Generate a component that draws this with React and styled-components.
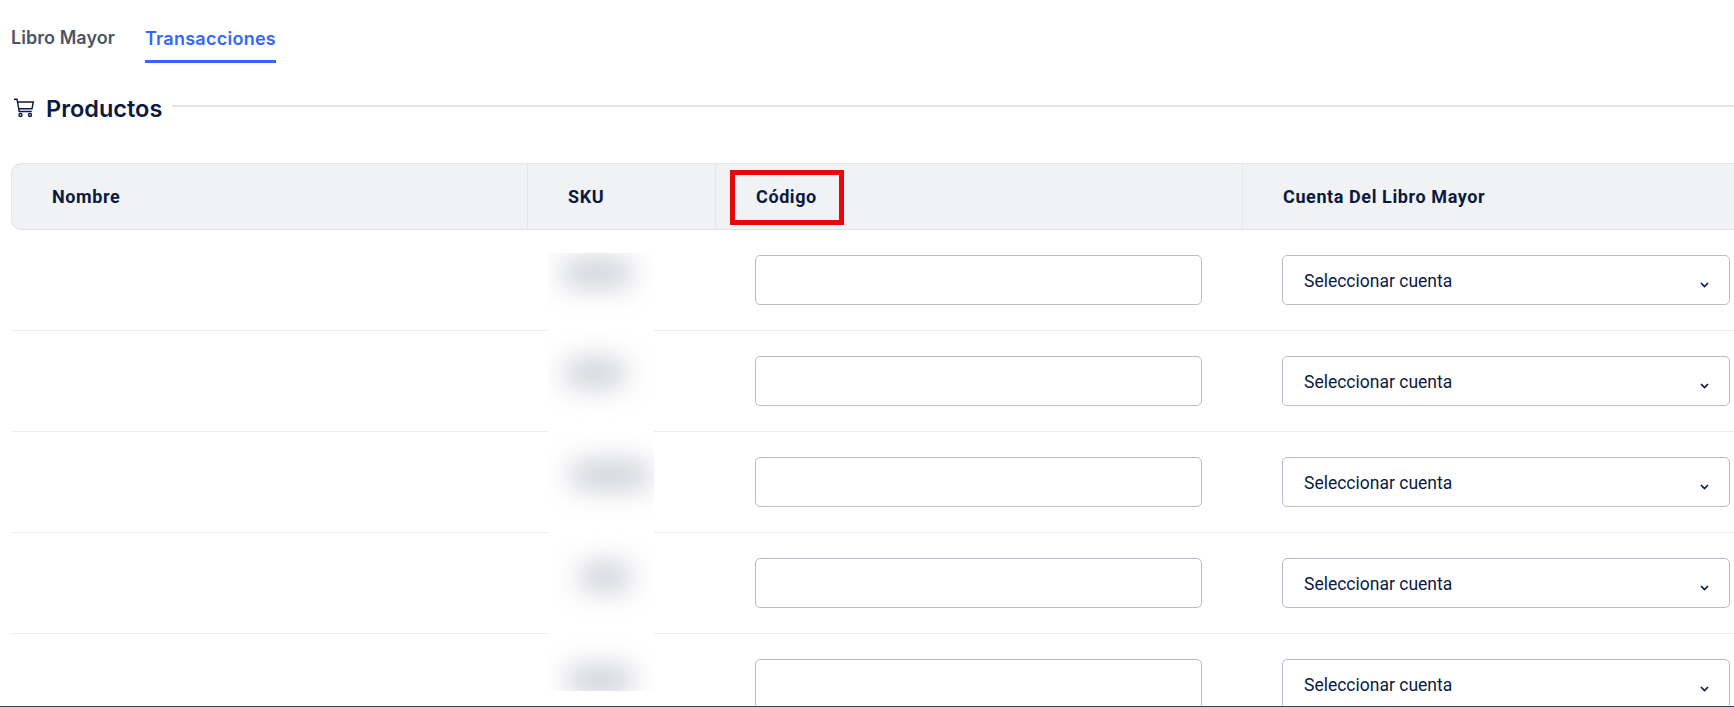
import React from "react";
import styled, { createGlobalStyle } from "styled-components";

const GlobalStyle = createGlobalStyle`
  html, body {
    margin: 0;
    padding: 0;
    height: 100%;
    overflow: hidden;
    background: #fff;
  }
  * {
    box-sizing: border-box;
  }
`;

const Page = styled.div`
  height: 100vh;
  display: flex;
  flex-direction: column;
  overflow: hidden;
`;
const Content = styled.main`
  flex: 1;
  min-height: 0;
  padding: 0 0 0 11px;
  overflow: hidden;
`;
const BottomRule = styled.div`
  height: 1px;
  flex: none;
  background: #3b4a4c;
`;

const Tabs = styled.nav`
  display: flex;
  gap: 30px;
  height: 63px;
  padding-top: 25px;
`;
const Tab = styled.a`
  height: 38px;
  font-family: Inter, sans-serif;
  font-size: 18px;
  font-weight: 600;
  line-height: 28px;
  letter-spacing: ${(p) => (p.$active ? "0.27px" : "0.05px")};
  color: ${(p) => (p.$active ? "#3366ff" : "#4b5563")};
  border-bottom: ${(p) => (p.$active ? "3px solid #3366ff" : "none")};
  margin-top: ${(p) => (p.$active ? "0" : "-1px")};
`;

const SectionHead = styled.div`
  display: flex;
  align-items: center;
  height: 100px;
  padding: 0 0 10px 2px;
`;
const SectionTitle = styled.h2`
  margin: 1px 10px 0 11px;
  font-family: Inter, sans-serif;
  font-size: 23.5px;
  font-weight: 600;
  line-height: 30px;
  color: #0b1a3f;
`;
const SectionLine = styled.div`
  flex: 1;
  height: 2px;
  margin-top: -5px;
  background: #e3e4e8;
`;

const Table = styled.div`
  width: 1760px;
  font-family: Roboto, sans-serif;
  color: #0b1a3f;
`;
const HeadRow = styled.div`
  display: grid;
  grid-template-columns: 516px 188px 527px 529px;
  height: 67px;
  background: #f1f2f4;
  border: 1px solid #e3e4e8;
  border-right: none;
  border-radius: 10px 0 0 10px;
`;
const HeadCell = styled.div`
  position: relative;
  display: flex;
  align-items: center;
  padding-left: 40px;
  font-size: 18px;
  font-weight: 700;
  letter-spacing: 0.6px;
  border-right: ${(p) => (p.$last ? "none" : "1px solid #e6e7eb")};
`;
const Highlight = styled.div`
  position: absolute;
  left: 14px;
  top: 6px;
  width: 114px;
  height: 55px;
  border: 5px solid #e80808;
`;

const Row = styled.div`
  display: grid;
  grid-template-columns: 516px 188px 527px 529px;
  height: 101px;
  border-bottom: 1px solid #eaedf1;
`;
const Cell = styled.div`
  padding: 25px 40px 0;
`;
const SkuCell = styled.div`
  position: relative;
`;
const SkuMask = styled.div`
  position: absolute;
  left: 21px;
  top: ${(p) => p.$top}px;
  width: 106px;
  height: ${(p) => p.$height}px;
  background: #fff;
  overflow: hidden;
`;
const SkuBlur = styled.div`
  position: absolute;
  left: ${(p) => p.$left}px;
  top: ${(p) => p.$y}px;
  width: ${(p) => p.$width}px;
  height: 28px;
  background: #ccced6;
  border-radius: 14px;
  filter: blur(14px);
`;

const CodeInput = styled.input`
  display: block;
  width: 447px;
  height: 50px;
  padding: 0 20px;
  background: #fff;
  border: 1px solid #b9bdc9;
  border-radius: 5px;
  outline: none;
`;
const SelectBox = styled.button`
  display: flex;
  justify-content: space-between;
  align-items: center;
  width: 448px;
  height: 50px;
  padding: 2px 20px 0 21px;
  background: #fff;
  border: 1px solid #b9bdc9;
  border-radius: 5px;
  font-family: Roboto, sans-serif;
  font-size: 17.5px;
  color: #0b1a3f;
`;
const Chevron = styled.svg`
  width: 9px;
  height: 6px;
  margin-top: 8px;
  fill: none;
  stroke: #0b1a3f;
  stroke-width: 1.7;
`;

const CartIcon = () => (
  <svg width="22" height="20" viewBox="0 0 22 20" fill="none" stroke="#0b1a3f" strokeWidth="1.4">
    <path d="M1 1.2h3l2.2 12.3h12.6" />
    <path d="M4.5 4h15.8l-1.3 6.8H5.7" />
    <circle cx="7.5" cy="17" r="1.5" />
    <circle cx="17" cy="17" r="1.5" />
  </svg>
);

const rows = [
  { top: 23, height: 78, left: 13, y: 6, width: 72 },
  { top: 0, height: 101, left: 16, y: 28, width: 62 },
  { top: 0, height: 101, left: 21, y: 29, width: 82 },
  { top: 0, height: 101, left: 30, y: 30, width: 54 },
  { top: 0, height: 57, left: 18, y: 32, width: 68 },
];

export default function App() {
  return (
    <Page>
      <GlobalStyle />
      <Content>
        <Tabs>
          <Tab>Libro Mayor</Tab>
          <Tab $active>Transacciones</Tab>
        </Tabs>
        <SectionHead>
          <CartIcon />
          <SectionTitle>Productos</SectionTitle>
          <SectionLine />
        </SectionHead>
        <Table>
          <HeadRow>
            <HeadCell>Nombre</HeadCell>
            <HeadCell>SKU</HeadCell>
            <HeadCell>
              Código
              <Highlight />
            </HeadCell>
            <HeadCell $last>Cuenta Del Libro Mayor</HeadCell>
          </HeadRow>
          {rows.map((r, i) => (
            <Row key={i}>
              <div />
              <SkuCell>
                <SkuMask $top={r.top} $height={r.height}>
                  <SkuBlur $left={r.left} $y={r.y} $width={r.width} />
                </SkuMask>
              </SkuCell>
              <Cell>
                <CodeInput type="text" />
              </Cell>
              <Cell>
                <SelectBox type="button">
                  Seleccionar cuenta
                  <Chevron viewBox="0 0 9 6">
                    <path d="M1 1l3.5 3.5L8 1" />
                  </Chevron>
                </SelectBox>
              </Cell>
            </Row>
          ))}
        </Table>
      </Content>
      <BottomRule />
    </Page>
  );
}
